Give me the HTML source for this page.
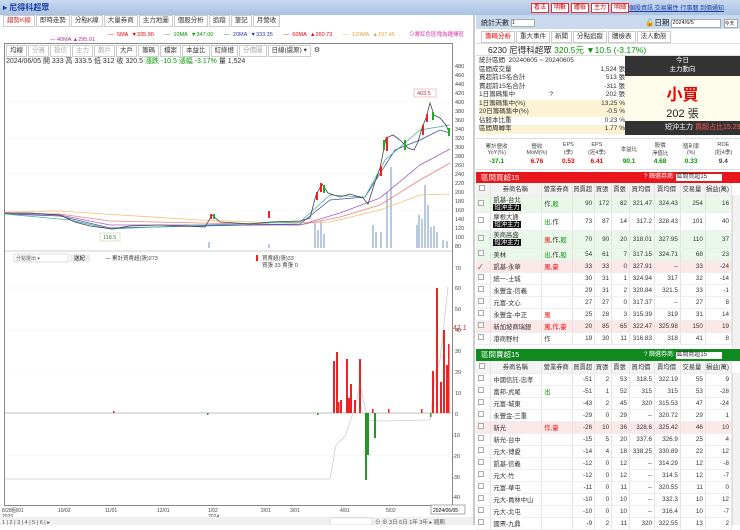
<!DOCTYPE html>
<html><head><meta charset="utf-8"><style>
*{box-sizing:border-box;margin:0;padding:0}
body{width:740px;height:525px;overflow:hidden;background:#fff;font-family:"Liberation Sans","Noto Sans CJK TC",sans-serif;font-size:7px;color:#333;position:relative}
.abs{position:absolute}
.topbar{left:0;top:0;width:740px;height:15px;background:linear-gradient(#c8d8ee,#a9c2e4)}
.btn{display:inline-block;border:1px solid #d33;color:#c00;background:#fff;padding:0 2px;font-size:6px;line-height:8px;margin-right:2px}
.tabs span{display:inline-block;border:1px solid #ccc;padding:0 3px;line-height:10px;margin-right:1px;background:#fff;font-size:6.5px}
table{border-collapse:collapse;width:100%}
.t td{height:12px;font-size:6.3px;border-right:1px solid #e4e4e4;border-bottom:1px solid #eee;text-align:right;padding-right:2px;white-space:nowrap}
.t td.l{text-align:left;padding-left:2px}
.t tr.h td{background:#f3f3f3;text-align:center;height:12px}
.t tr.g td{background:#eaf8ea}
.t tr.p td{background:#fde8e8}
.tag{background:#111;color:#fff;padding:0 1px}
.r{color:#e00}.gn{color:#090}
.cb{display:inline-block;width:6px;height:6px;border:1px solid #aaa;background:#fff}
</style></head><body>
<div class="abs topbar"></div>
<div class="abs" style="left:3px;top:2px;color:#1a3fa8;font-size:8px;font-weight:bold">▸ 尼得科超眾</div>
<div class="abs" style="left:531px;top:3px;white-space:nowrap"><span class="btn">看法</span><span class="btn">明數</span><span class="btn">體檢</span><span class="btn">主力</span><span class="btn">明細</span></div>
<div class="abs" style="left:629px;top:3px;color:#1a3fa8;font-size:6px;text-decoration:underline;white-space:nowrap">個股資訊 交易屬性 行事曆 到價通知</div>

<div class="abs tabs" style="left:3px;top:15px"><span style="color:#c33">趨勢K線</span><span>即時走勢</span><span>分點K線</span><span>大量券商</span><span>主力地圖</span><span>個股分析</span><span>追蹤</span><span>筆記</span><span>月營收</span></div>
<div class="abs" style="left:108px;top:30px;font-size:5.5px;word-spacing:2px;white-space:nowrap"><span class="r">— 5MA ▼335.90</span>&nbsp;&nbsp;&nbsp;<span class="gn">— 10MA ▼347.00</span>&nbsp;&nbsp;&nbsp;<span style="color:#33a">— 20MA ▼333.35</span>&nbsp;&nbsp;&nbsp;<span class="r">— 60MA ▲260.73</span>&nbsp;&nbsp;&nbsp;<span style="color:#e9a23b">— 120MA ▲197.45</span>&nbsp;&nbsp;&nbsp;&nbsp;<span style="color:#d3a">⊙將紅色區塊為選擇區</span></div>
<div class="abs" style="left:50px;top:37px;font-size:5.5px;color:#a3a">— 40MA ▲295.01</div>

<div class="abs" style="left:4px;top:43px;width:449px;height:463px;border:1px solid #888"></div>
<div class="abs tabs" style="left:6px;top:45px"><span>均線</span><span style="color:#aaa">分買</span><span style="color:#aaa">投信</span><span style="color:#aaa">主力</span><span style="color:#aaa">散戶</span><span>大戶</span><span>籌碼</span><span>檔案</span><span>本益比</span><span>紅綠燈</span><span style="color:#aaa">分價圖</span><span>日線(還原) ▾</span> ⚙</div>
<div class="abs" style="left:6px;top:56px;font-size:7px">2024/06/05 開 333 高 333.5 低 312 收 320.5 <span class="gn">漲跌 -10.5 漲幅 -3.17%</span> 量 1,524</div>

<svg class="abs" style="left:0;top:60px" width="475" height="465" viewBox="0 60 475 465">
<g stroke="#f0f0f0" stroke-width="0.5">
<line x1="5" y1="102" x2="452" y2="102"/><line x1="5" y1="138" x2="452" y2="138"/><line x1="5" y1="174" x2="452" y2="174"/><line x1="5" y1="210" x2="452" y2="210"/>
<line x1="5" y1="288" x2="452" y2="288"/><line x1="5" y1="330" x2="452" y2="330"/><line x1="5" y1="371" x2="452" y2="371"/><line x1="5" y1="455" x2="452" y2="455"/>
</g>
<g font-size="5.5" fill="#444">
<text x="455" y="68">480</text><text x="455" y="77">460</text><text x="455" y="86">440</text><text x="455" y="95">420</text><text x="455" y="104">400</text><text x="455" y="113">380</text><text x="455" y="122">360</text><text x="455" y="131">340</text><text x="455" y="140">320</text><text x="455" y="149">300</text><text x="455" y="158">280</text><text x="455" y="167">260</text><text x="455" y="176">240</text><text x="455" y="185">220</text><text x="455" y="194">200</text><text x="455" y="203">180</text><text x="455" y="212">160</text><text x="455" y="221">140</text><text x="455" y="230">120</text><text x="455" y="239">100</text><text x="455" y="248">80</text>
<text x="455" y="270">70</text><text x="455" y="290">60</text><text x="455" y="311">50</text><text x="455" y="332">40</text><text x="455" y="353">30</text><text x="455" y="374">20</text><text x="455" y="395">10</text><text x="455" y="416">0</text><text x="452" y="437">-10</text><text x="452" y="458">-20</text><text x="452" y="479">-30</text><text x="452" y="499">-40</text>
</g>
<text x="453" y="330" font-size="7" fill="#c33">42.1</text>
<g fill="#b8c9e0">
<rect x="208" y="242" width="2" height="6"/><rect x="268" y="244" width="2" height="4"/>
<rect x="314" y="222" width="2" height="26"/><rect x="317" y="230" width="2" height="18"/><rect x="320" y="221" width="2" height="27"/><rect x="323" y="234" width="2" height="14"/>
<rect x="372" y="225" width="2" height="23"/><rect x="375" y="232" width="2" height="16"/><rect x="380" y="232" width="2" height="16"/><rect x="386" y="192" width="2" height="56"/><rect x="390" y="167" width="2" height="81"/>
<rect x="416" y="225" width="2" height="23"/><rect x="418" y="215" width="2" height="33"/><rect x="421" y="219" width="2" height="29"/><rect x="424" y="185" width="2" height="63"/><rect x="427" y="205" width="2" height="43"/><rect x="430" y="227" width="2" height="21"/><rect x="433" y="226" width="2" height="22"/><rect x="436" y="232" width="2" height="16"/><rect x="442" y="240" width="2" height="8"/><rect x="446" y="241" width="2" height="7"/>
</g>
<polyline fill="none" stroke="#f3c070" stroke-width="0.8" points="5,212 60,211 120,215 200,220 280,223 330,222 380,210 420,195 450,194"/>
<polyline fill="none" stroke="#f08080" stroke-width="0.8" points="5,214 60,214 110,221 200,223 300,225 340,217 380,205 420,180 450,163"/>
<polyline fill="none" stroke="#a060c0" stroke-width="0.8" points="5,213 60,215 110,225 200,225 300,225 340,213 380,198 420,165 450,149"/>
<polyline fill="none" stroke="#4050b0" stroke-width="0.8" points="5,214 60,216 110,228 200,226 300,224 330,200 365,197 395,150 420,140 440,130 450,133"/>
<polyline fill="none" stroke="#40b0a0" stroke-width="0.8" points="5,214 70,220 110,229 200,225 300,222 330,195 365,197 385,160 420,130 450,125"/>
<polyline fill="none" stroke="#444" stroke-width="0.8" points="5,213 30,213 60,215 75,222 90,226 112,229 130,226 160,225 205,227 212,215 220,222 250,224 270,222 300,221 310,218 316,195 322,184 328,193 340,197 350,194 363,198 368,204 375,182 380,168 386,138 393,135 400,140 408,148 414,150 418,142 422,128 426,118 430,103 434,115 440,118 446,125 449,132"/>
<g fill="#e22"><rect x="316" y="192" width="2" height="8"/><rect x="320" y="183" width="2" height="9"/><rect x="380" y="166" width="2" height="10"/><rect x="386" y="137" width="2" height="14"/><rect x="422" y="125" width="2" height="10"/><rect x="426" y="114" width="2" height="8"/><rect x="268" y="211" width="2" height="7"/><rect x="210" y="214" width="2" height="5"/></g>
<g fill="#2a2"><rect x="323" y="185" width="2" height="8"/><rect x="383" y="140" width="2" height="10"/><rect x="404" y="140" width="2" height="10"/><rect x="432" y="112" width="2" height="8"/><rect x="448" y="128" width="2" height="8"/><rect x="213" y="214" width="2" height="5"/></g>
<rect x="414" y="89" width="22" height="8" fill="#fff" stroke="#e88" stroke-width="0.5"/><text x="417" y="95" font-size="5.5" fill="#c33">403.5</text>
<rect x="100" y="233" width="20" height="8" fill="#fff" stroke="#ac8" stroke-width="0.5"/><text x="103" y="239" font-size="5.5" fill="#474">118.5</text>
<line x1="5" y1="251" x2="452" y2="251" stroke="#ccc"/>
<rect x="14" y="254" width="54" height="8" fill="#fff" stroke="#bbb" stroke-width="0.5"/><text x="16" y="260" font-size="5" fill="#555">分點選出 ▾</text>
<rect x="70" y="254" width="20" height="8" fill="#eee"/><text x="74" y="260" font-size="5.5">送紀</text>
<text x="105" y="260" font-size="5.5" fill="#444">— 累計買賣超(張)273</text>
<rect x="256" y="255" width="2" height="6" fill="#e22"/><text x="262" y="260" font-size="5.5" fill="#444">買賣超(張)33</text>
<text x="262" y="267" font-size="5.5" fill="#444">買張 33 賣張 0</text>
<line x1="5" y1="413" x2="452" y2="413" stroke="#aaa" stroke-width="0.7"/>
<polyline fill="none" stroke="#ccc" stroke-width="0.8" points="5,479 330,479 336,445 345,436 355,408 360,385 368,420 380,421 430,420 436,370 440,360 448,287"/>
<g fill="#e22">
<rect x="333" y="361" width="2" height="52"/><rect x="336" y="352" width="2" height="61"/><rect x="338" y="402" width="1.5" height="11"/><rect x="340" y="400" width="2" height="13"/><rect x="346" y="359" width="2" height="54"/><rect x="348" y="398" width="2" height="15"/><rect x="350" y="384" width="2" height="29"/><rect x="354" y="400" width="2" height="13"/><rect x="359" y="359" width="2" height="54"/><rect x="113" y="411" width="1.5" height="2"/><rect x="372" y="409" width="1.5" height="4"/><rect x="388" y="409" width="1.5" height="4"/><rect x="421" y="409" width="1.5" height="4"/>
<rect x="432" y="371" width="2" height="42"/><rect x="436" y="288" width="2" height="125"/><rect x="440" y="382" width="2" height="31"/><rect x="443" y="330" width="2" height="83"/><rect x="446" y="365" width="2" height="48"/><rect x="448" y="344" width="1.5" height="69"/>
</g>
<g fill="#292"><rect x="365" y="413" width="2" height="67"/><rect x="367" y="413" width="2" height="42"/><rect x="374" y="413" width="2" height="25"/><rect x="207" y="413" width="1.5" height="2"/><rect x="317" y="413" width="1.5" height="2"/><rect x="430" y="413" width="1.5" height="4"/></g>
<g font-size="5" fill="#444"><text x="2" y="512">8/28個/01</text><text x="2" y="518">2023</text><text x="58" y="512">10/02</text><text x="105" y="512">11/01</text><text x="157" y="512">12/01</text><text x="208" y="512">1/02</text><text x="208" y="518">2024</text><text x="261" y="512">2/01</text><text x="290" y="512">3/01</text><text x="340" y="512">4/01</text><text x="386" y="512">5/02</text></g>
<rect x="431" y="505" width="34" height="9" fill="#fff" stroke="#555" stroke-width="0.5"/><text x="433" y="512" font-size="5">2024/06/05</text>
<rect x="0" y="517" width="475" height="8" fill="#f0f0f0"/>
<text x="2" y="524" font-size="5.5" fill="#555">1 | 2 | 3 | 4 | 5 | 6 | ▸</text>
<rect x="330" y="518" width="42" height="7" fill="#fff" stroke="#bbb" stroke-width="0.5"/>
<text x="375" y="524" font-size="5.5" fill="#555">⊖ ⊕ 3日 6日 1年 3年 ▸ 週期</text>
</svg>
<div class="abs" style="left:473px;top:15px;width:2px;height:510px;background:#ccc"></div>

<div class="abs" style="left:476px;top:15px;width:264px;height:14px;background:#c9d9ee"></div>
<div class="abs" style="left:481px;top:18px;font-size:7px;color:#222;white-space:nowrap">統計天數 <span style="display:inline-block;width:24px;height:8px;background:#fff;border:1px solid #aaa;font-size:5.5px;vertical-align:middle">1</span></div>
<div class="abs" style="left:645px;top:17px;font-size:7.5px;color:#222;white-space:nowrap">🔓日期 <span style="display:inline-block;width:50px;height:9px;background:#fff;border:1px solid #aaa;font-size:5.5px;vertical-align:middle">2024/6/5</span> <span style="display:inline-block;width:14px;height:9px;background:#fff;border:1px solid #aaa;font-size:5px;vertical-align:middle">今天</span></div>
<div class="abs tabs" style="left:481px;top:31px;white-space:nowrap"><span class="r">籌碼分析</span><span>重大事件</span><span>新聞</span><span>分點追蹤</span><span>體檢表</span><span>法人動態</span></div>
<div class="abs" style="left:476px;top:43px;width:264px;height:13px;border-top:1px solid #ddd;border-bottom:1px solid #ddd"></div>
<div class="abs" style="left:488px;top:44px;font-size:8.5px;color:#222;white-space:nowrap">6230 尼得科超眾 <span class="gn">320.5元 ▼10.5 (-3.17%)</span></div>
<div class="abs" style="left:479px;top:57px;width:146px;font-size:6.5px;line-height:8.5px;white-space:nowrap">
<div>統計區間 &nbsp;20240605 ~ 20240605</div>
<div>區間成交量<span style="float:right">1,524 張</span></div>
<div>買超前15名合計<span style="float:right">513 張</span></div>
<div>賣超前15名合計<span style="float:right">-311 張</span></div>
<div>1日籌碼集中 &nbsp;&nbsp;&nbsp;&nbsp;&nbsp;&nbsp;&nbsp;&nbsp;&nbsp;&nbsp;&nbsp;&nbsp;&nbsp;&nbsp;&nbsp;&nbsp;&nbsp;&nbsp;?<span style="float:right">202 張</span></div>
<div style="background:#fbf3d4">1日籌碼集中(%)<span style="float:right">13.25 %</span></div>
<div style="background:#fbf3d4">20日籌碼集中(%)<span style="float:right">-0.5 %</span></div>
<div>佔股本比重<span style="float:right">0.23 %</span></div>
<div style="background:#fbf3d4">區間周轉率<span style="float:right">1.77 %</span></div>
</div>
<div class="abs" style="left:625px;top:56px;width:115px;height:20px;background:#333;color:#fff;text-align:center;font-size:6.5px;line-height:9px">今日<br>主力動向</div>
<div class="abs" style="left:625px;top:76px;width:115px;height:45px;background:#fdfbea;text-align:center">
<div style="color:#e00;font-size:16px;font-weight:bold;margin-top:5px">小買</div><div style="font-size:11px;color:#222">202 張</div></div>
<div class="abs" style="left:625px;top:121px;width:115px;height:14px;background:#333;color:#fff;font-size:7px;line-height:14px;padding-left:40px;white-space:nowrap">短沖主力 <span style="color:#f55">買超占比15.29%</span></div>
<div class="abs" style="left:476px;top:138px;width:264px;height:32px;border-top:1px solid #ddd;border-bottom:1px solid #ddd">
<table style="text-align:center;font-size:5.5px;color:#444"><tr style="height:19px"><td>累計營收<br>YoY(%)</td><td>營收<br>MoM(%)</td><td>EPS<br>(季)</td><td>EPS<br>(近4季)</td><td>本益比</td><td>股價<br>淨值比</td><td>殖利率<br>(%)</td><td>ROE<br>(近4季)</td></tr>
<tr style="font-size:6.5px;font-weight:bold"><td class="gn">-37.1</td><td class="r">6.76</td><td class="r">0.53</td><td class="r">6.41</td><td class="gn">90.1</td><td class="gn">4.68</td><td class="gn">0.33</td><td>9.4</td></tr></table></div>

<div class="abs" style="left:476px;top:172px;width:264px;height:11px;background:#e8161b;color:#fff;font-size:7.5px;line-height:11px;padding-left:5px">區間買超15<span style="position:absolute;left:168px;font-size:6px;white-space:nowrap">? 篩選券商: <span style="background:#fff;color:#333;display:inline-block;width:46px;line-height:7px">區間買超15</span></span></div>
<div class="abs" style="left:476px;top:183px;width:256px">
<table class="t">
<colgroup><col style="width:15px"><col style="width:51px"><col style="width:31px"><col style="width:21px"><col style="width:17px"><col style="width:18px"><col style="width:25px"><col style="width:26px"><col style="width:25px"><col></colgroup>
<tr class="h"><td><span class="cb"></span></td><td>券商名稱</td><td>營業券商</td><td>買賣超</td><td>買張</td><td>賣張</td><td>買均價</td><td>賣均價</td><td>交易量</td><td>損益(萬)</td></tr>
<tr class="g"><td class="l"><span class="cb"></span></td><td class="l" style="height:17px;line-height:7px">凱基-台北<br><span class="tag">短沖主力</span></td><td class="l">作,<span class="gn">股</span></td><td>90</td><td>172</td><td>82</td><td>321.47</td><td>324.43</td><td>254</td><td>16</td></tr>
<tr><td class="l"><span class="cb"></span></td><td class="l" style="height:18px;line-height:7px">摩根大通<br><span class="tag">短沖主力</span></td><td class="l"><span class="gn">出</span>,作</td><td>73</td><td>87</td><td>14</td><td>317.2</td><td>328.43</td><td>101</td><td>40</td></tr>
<tr class="g"><td class="l"><span class="cb"></span></td><td class="l" style="height:18px;line-height:7px">美商高盛<br><span class="tag">短沖主力</span></td><td class="l"><span class="r">風</span>,作,<span class="gn">股</span></td><td>70</td><td>90</td><td>20</td><td>318.01</td><td>327.95</td><td>110</td><td>37</td></tr>
<tr class="g"><td class="l"><span class="cb"></span></td><td class="l">美林</td><td class="l"><span class="gn">出</span>,作,<span class="gn">股</span></td><td>54</td><td>61</td><td>7</td><td>317.15</td><td>324.71</td><td>68</td><td>23</td></tr>
<tr class="p"><td class="l">✓</td><td class="l">凱基-永華</td><td class="l r">風,豪</td><td>33</td><td>33</td><td>0</td><td>327.91</td><td>--</td><td>33</td><td>-24</td></tr>
<tr><td class="l"><span class="cb"></span></td><td class="l">統一-土城</td><td></td><td>30</td><td>31</td><td>1</td><td>324.94</td><td>317</td><td>32</td><td>-14</td></tr>
<tr><td class="l"><span class="cb"></span></td><td class="l">永豐金-信義</td><td></td><td>29</td><td>31</td><td>2</td><td>320.84</td><td>321.5</td><td>33</td><td>-1</td></tr>
<tr><td class="l"><span class="cb"></span></td><td class="l">元富-文心</td><td></td><td>27</td><td>27</td><td>0</td><td>317.37</td><td>--</td><td>27</td><td>8</td></tr>
<tr><td class="l"><span class="cb"></span></td><td class="l">永豐金-中正</td><td class="l r">風</td><td>25</td><td>28</td><td>3</td><td>315.39</td><td>319</td><td>31</td><td>14</td></tr>
<tr class="p"><td class="l"><span class="cb"></span></td><td class="l">新加坡商瑞銀</td><td class="l r">風,作,豪</td><td>20</td><td>85</td><td>65</td><td>322.47</td><td>325.98</td><td>150</td><td>19</td></tr>
<tr><td class="l"><span class="cb"></span></td><td class="l">港商野村</td><td class="l">作</td><td>19</td><td>30</td><td>11</td><td>316.83</td><td>318</td><td>41</td><td>8</td></tr>
</table></div>
<div class="abs" style="left:732px;top:195px;width:8px;height:153px;background:#f2f2f2;border-left:1px solid #ddd"></div>

<div class="abs" style="left:476px;top:349px;width:264px;height:12px;background:#0e8a1e;color:#fff;font-size:7.5px;line-height:12px;padding-left:5px">區間賣超15<span style="position:absolute;left:168px;font-size:6px;white-space:nowrap">? 篩選券商: <span style="background:#fff;color:#333;display:inline-block;width:46px;line-height:7px">區間賣超15</span></span></div>
<div class="abs" style="left:476px;top:361px;width:256px">
<table class="t">
<colgroup><col style="width:15px"><col style="width:51px"><col style="width:31px"><col style="width:21px"><col style="width:17px"><col style="width:18px"><col style="width:25px"><col style="width:26px"><col style="width:25px"><col></colgroup>
<tr class="h"><td><span class="cb"></span></td><td>券商名稱</td><td>營業券商</td><td>買賣超</td><td>買張</td><td>賣張</td><td>買均價</td><td>賣均價</td><td>交易量</td><td>損益(萬)</td></tr>
<tr><td class="l"><span class="cb"></span></td><td class="l">中國信託-忠孝</td><td></td><td>-51</td><td>2</td><td>53</td><td>318.5</td><td>322.19</td><td>55</td><td>9</td></tr>
<tr><td class="l"><span class="cb"></span></td><td class="l">富邦-虎尾</td><td class="l gn">出</td><td>-51</td><td>1</td><td>52</td><td>315</td><td>315</td><td>53</td><td>-28</td></tr>
<tr><td class="l"><span class="cb"></span></td><td class="l">元富-城東</td><td></td><td>-43</td><td>2</td><td>45</td><td>320</td><td>315.53</td><td>47</td><td>-24</td></tr>
<tr><td class="l"><span class="cb"></span></td><td class="l">永豐金-三重</td><td></td><td>-29</td><td>0</td><td>29</td><td>--</td><td>320.72</td><td>29</td><td>1</td></tr>
<tr class="p"><td class="l"><span class="cb"></span></td><td class="l">新光</td><td class="l r">作,豪</td><td>-26</td><td>10</td><td>36</td><td>328.6</td><td>325.42</td><td>46</td><td>10</td></tr>
<tr><td class="l"><span class="cb"></span></td><td class="l">新光-台中</td><td></td><td>-15</td><td>5</td><td>20</td><td>337.6</td><td>326.9</td><td>25</td><td>4</td></tr>
<tr><td class="l"><span class="cb"></span></td><td class="l">元大-博愛</td><td></td><td>-14</td><td>4</td><td>18</td><td>338.25</td><td>330.89</td><td>22</td><td>12</td></tr>
<tr><td class="l"><span class="cb"></span></td><td class="l">凱基-信義</td><td></td><td>-12</td><td>0</td><td>12</td><td>--</td><td>314.29</td><td>12</td><td>-8</td></tr>
<tr><td class="l"><span class="cb"></span></td><td class="l">元大-竹</td><td></td><td>-12</td><td>0</td><td>12</td><td>--</td><td>314.5</td><td>12</td><td>-7</td></tr>
<tr><td class="l"><span class="cb"></span></td><td class="l">元富-華屯</td><td></td><td>-11</td><td>0</td><td>11</td><td>--</td><td>320.55</td><td>11</td><td>0</td></tr>
<tr><td class="l"><span class="cb"></span></td><td class="l">元大-員林中山</td><td></td><td>-10</td><td>0</td><td>10</td><td>--</td><td>332.3</td><td>10</td><td>12</td></tr>
<tr><td class="l"><span class="cb"></span></td><td class="l">元大-北屯</td><td></td><td>-10</td><td>0</td><td>10</td><td>--</td><td>316.4</td><td>10</td><td>-7</td></tr>
<tr><td class="l"><span class="cb"></span></td><td class="l">國票-九鼎</td><td></td><td>-9</td><td>2</td><td>11</td><td>320</td><td>322.55</td><td>13</td><td>2</td></tr>
</table></div>
<div class="abs" style="left:732px;top:373px;width:8px;height:152px;background:#f2f2f2;border-left:1px solid #ddd"></div>
</body></html>
